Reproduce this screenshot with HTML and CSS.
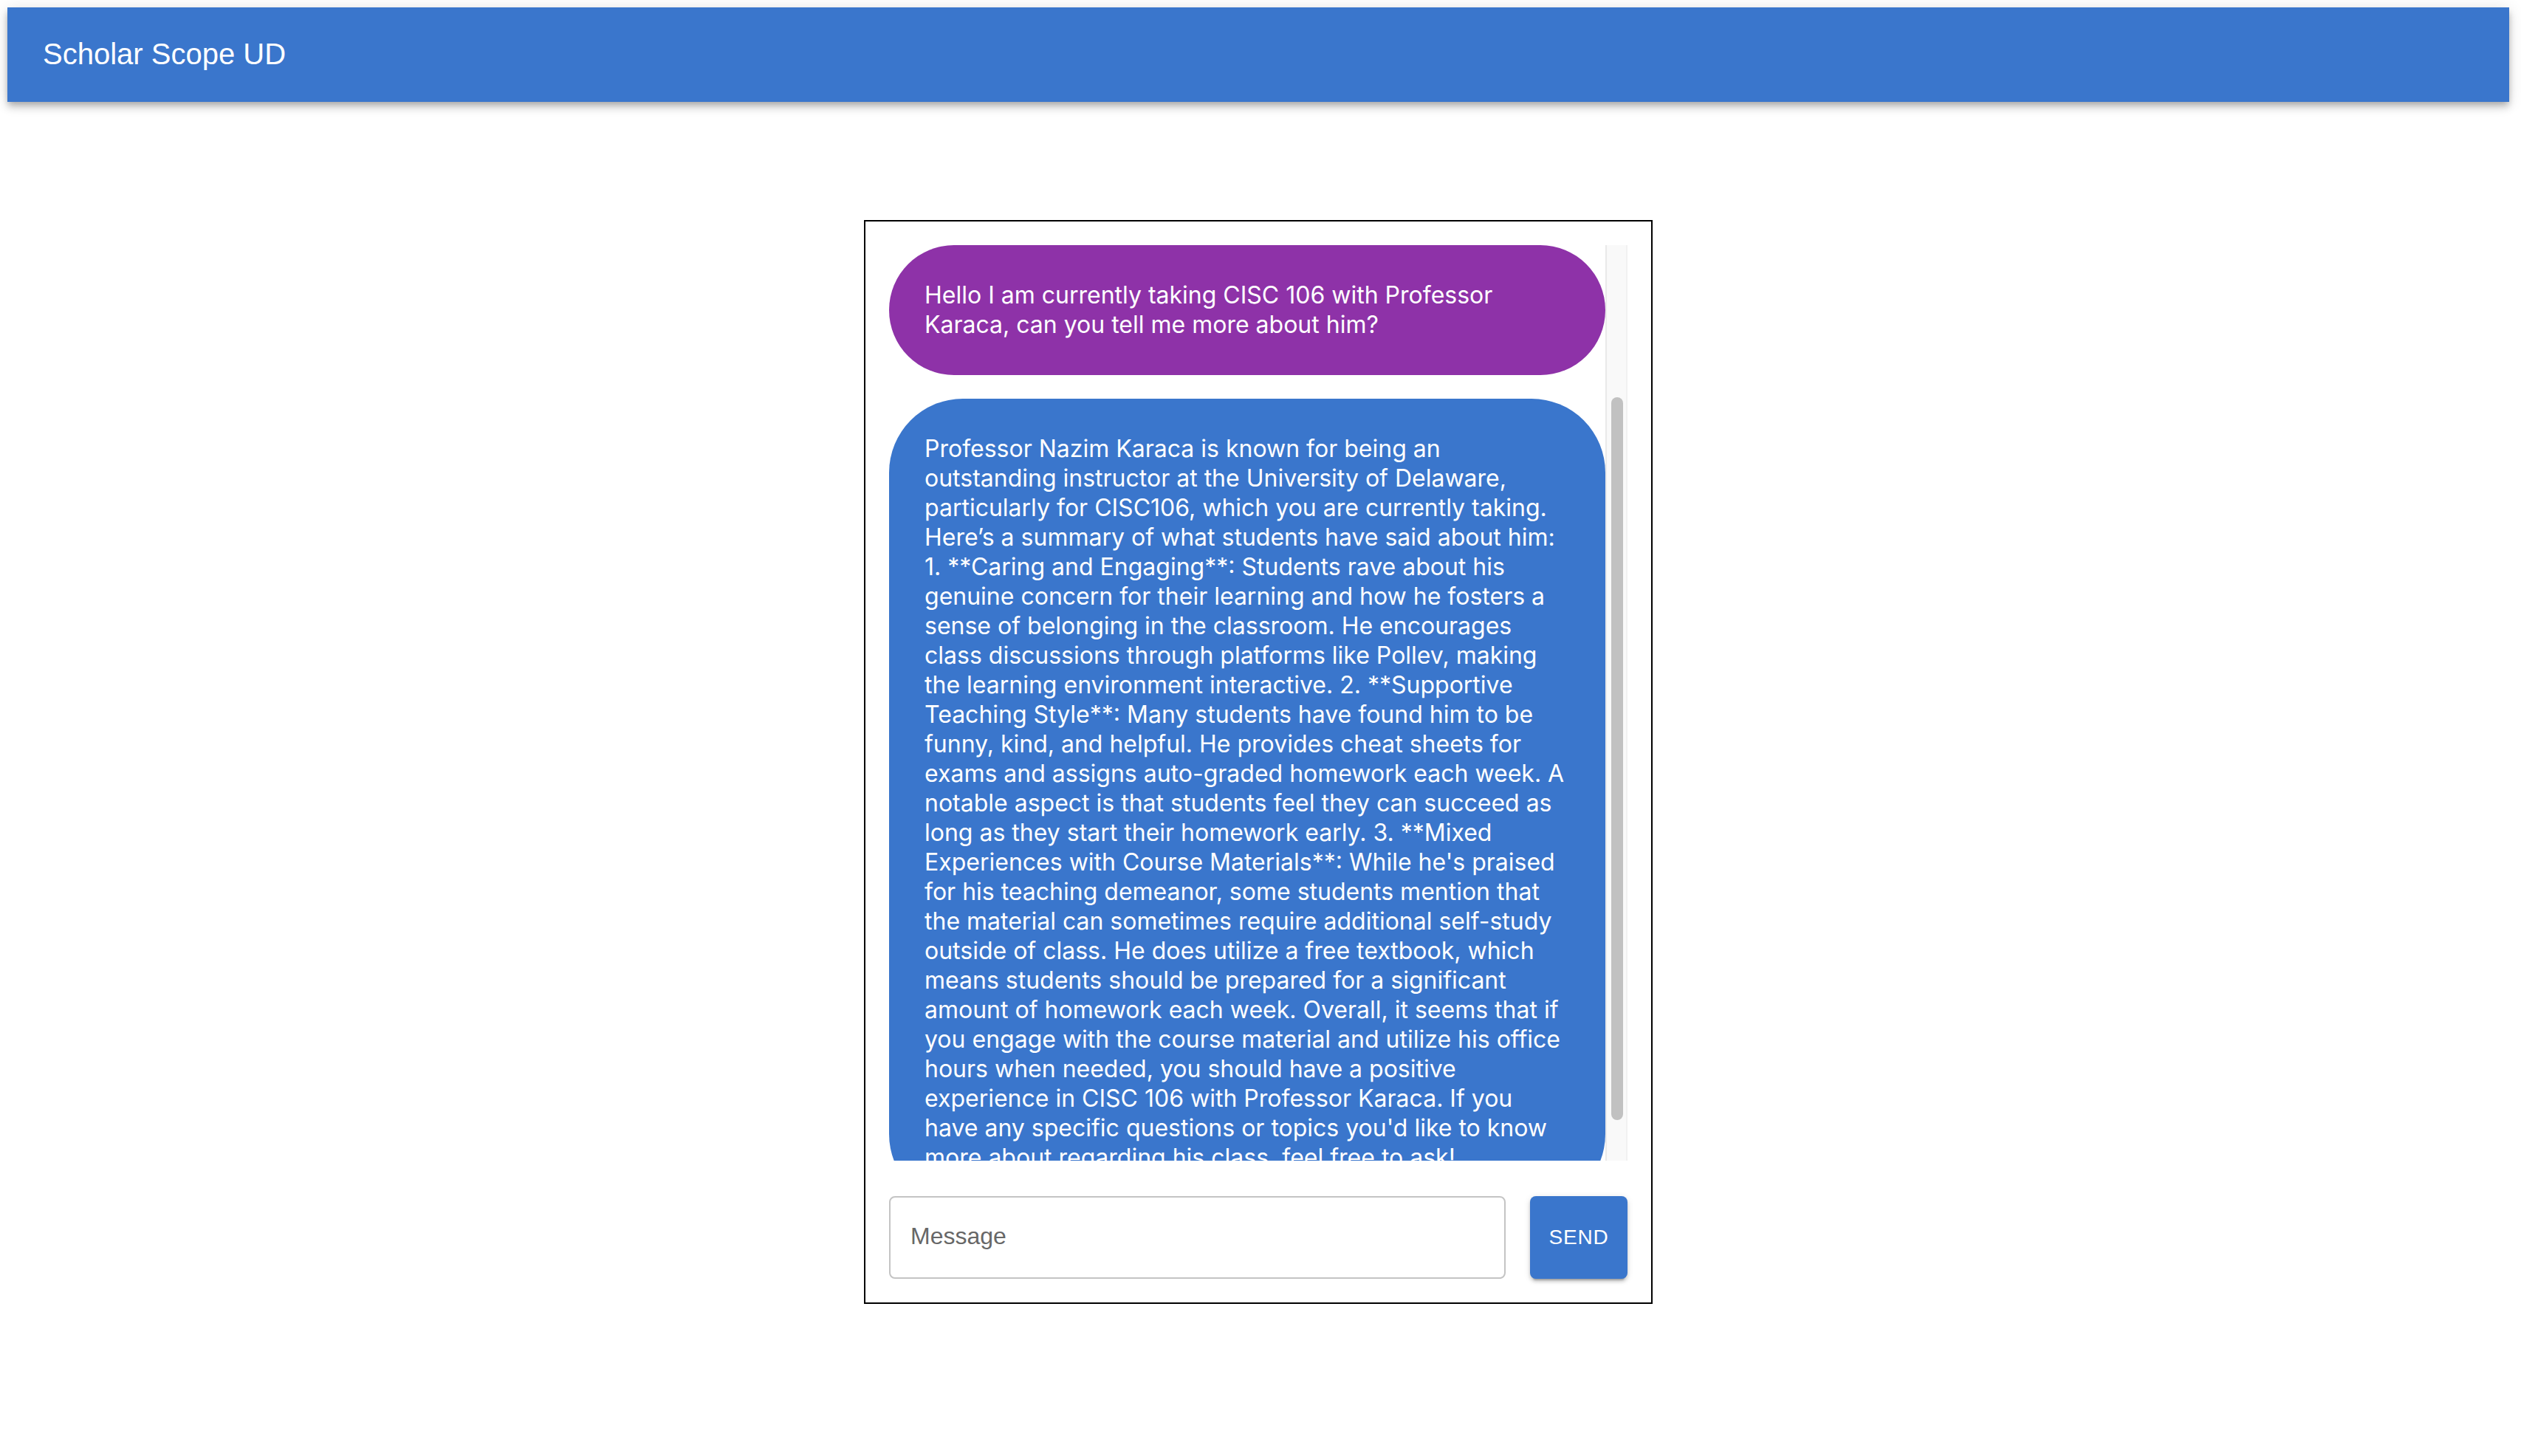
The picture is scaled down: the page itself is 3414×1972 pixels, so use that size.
FILE: index.html
```html
<!DOCTYPE html>
<html lang="en">
<head>
<meta charset="utf-8">
<title>Scholar Scope UD</title>
<link rel="stylesheet" href="styles.css">
</head>
<body>
<header class="app-bar">
  <h1 class="app-title">Scholar Scope UD</h1>
</header>
<main class="page">
  <section class="chat">
    <div class="messages">
      <div class="messages-viewport">
        <div class="bubble bubble-user">Hello I am currently taking CISC 106 with Professor Karaca, can you tell me more about him?</div>
        <div class="bubble bubble-bot">Professor Nazim Karaca is known for being an outstanding instructor at the University of Delaware, particularly for CISC106, which you are currently taking. Here’s a summary of what students have said about him: 1. **Caring and Engaging**: Students rave about his genuine concern for their learning and how he fosters a sense of belonging in the classroom. He encourages class discussions through platforms like Pollev, making the learning environment interactive. 2. **Supportive Teaching Style**: Many students have found him to be funny, kind, and helpful. He provides cheat sheets for exams and assigns auto-graded homework each week. A notable aspect is that students feel they can succeed as long as they start their homework early. 3. **Mixed Experiences with Course Materials**: While he's praised for his teaching demeanor, some students mention that the material can sometimes require additional self-study outside of class. He does utilize a free textbook, which means students should be prepared for a significant amount of homework each week. Overall, it seems that if you engage with the course material and utilize his office hours when needed, you should have a positive experience in CISC 106 with Professor Karaca. If you have any specific questions or topics you'd like to know more about regarding his class, feel free to ask!</div>
      </div>
      <div class="scrollbar">
        <div class="scrollbar-thumb" style="margin-top: 206px; height: 979px;"></div>
      </div>
    </div>
    <form class="composer">
      <input class="composer-input" type="text" placeholder="Message">
      <button class="send-btn" type="button">SEND</button>
    </form>
  </section>
</main>
</body>
</html>
```

FILE: styles.css
```css
html, body {
  margin: 0;
  padding: 0;
  background: #ffffff;
  font-family: "Liberation Sans", Arial, sans-serif;
}

.app-bar {
  margin: 10px 16px 0 10px;
  height: 128px;
  background: #3a76cc;
  display: flex;
  align-items: center;
  padding: 0 48px;
  box-shadow: 0 4px 8px -2px rgba(0,0,0,0.2), 0 8px 10px 0 rgba(0,0,0,0.14), 0 2px 20px 0 rgba(0,0,0,0.12);
}

.app-title {
  margin: 0 0 3px 0;
  color: #ffffff;
  font-family: "Liberation Sans", Arial, sans-serif;
  font-weight: normal;
  font-size: 40px;
  line-height: 1.2;
}

.page {
  margin: 160px 16px 0 10px;
  display: flex;
  justify-content: center;
}

.chat {
  width: 1000px;
  border: 2px solid #000000;
  padding: 32px;
  display: flex;
  flex-direction: column;
}

.messages {
  height: 1240px;
  display: flex;
}

.messages-viewport {
  flex: 1;
  min-width: 0;
  overflow: hidden;
}

.scrollbar {
  width: 30px;
  flex: none;
  box-sizing: border-box;
  background: #f9f9f9;
  border-left: 2px solid #e9e9e9;
  border-right: 2px solid #f1f1f1;
  padding: 0 4px 0 6px;
}

.scrollbar-thumb {
  background: #c1c1c1;
  border-radius: 8px;
}

.bubble {
  color: #ffffff;
  font-family: Inter, "Noto Sans", sans-serif;
  font-size: 32px;
  line-height: 40px;
  padding: 48px;
  border-radius: 100px;
}

.bubble + .bubble {
  margin-top: 32px;
}

.bubble-user {
  background: #8e32a8;
}

.bubble-bot {
  background: #3a76cc;
}

.composer {
  margin: 48px 0 0 0;
  display: flex;
  gap: 33px;
}

.composer-input {
  flex: 1;
  min-width: 0;
  height: 112px;
  box-sizing: border-box;
  border: 2px solid #c4c4c4;
  border-radius: 8px;
  padding: 0 27px 3px 27px;
  font-family: "Liberation Sans", Arial, sans-serif;
  font-size: 32px;
  color: #222;
  outline: none;
}

.composer-input::placeholder {
  color: #676767;
  opacity: 1;
}

.send-btn {
  width: 132px;
  height: 112px;
  border: none;
  border-radius: 8px;
  background: #3a76cc;
  color: #ffffff;
  font-family: "Liberation Sans", Arial, sans-serif;
  font-size: 28px;
  letter-spacing: 0.8px;
  padding: 0;
  box-shadow: 0 6px 2px -4px rgba(0,0,0,0.2), 0 4px 4px 0 rgba(0,0,0,0.14), 0 2px 10px 0 rgba(0,0,0,0.12);
}
```
